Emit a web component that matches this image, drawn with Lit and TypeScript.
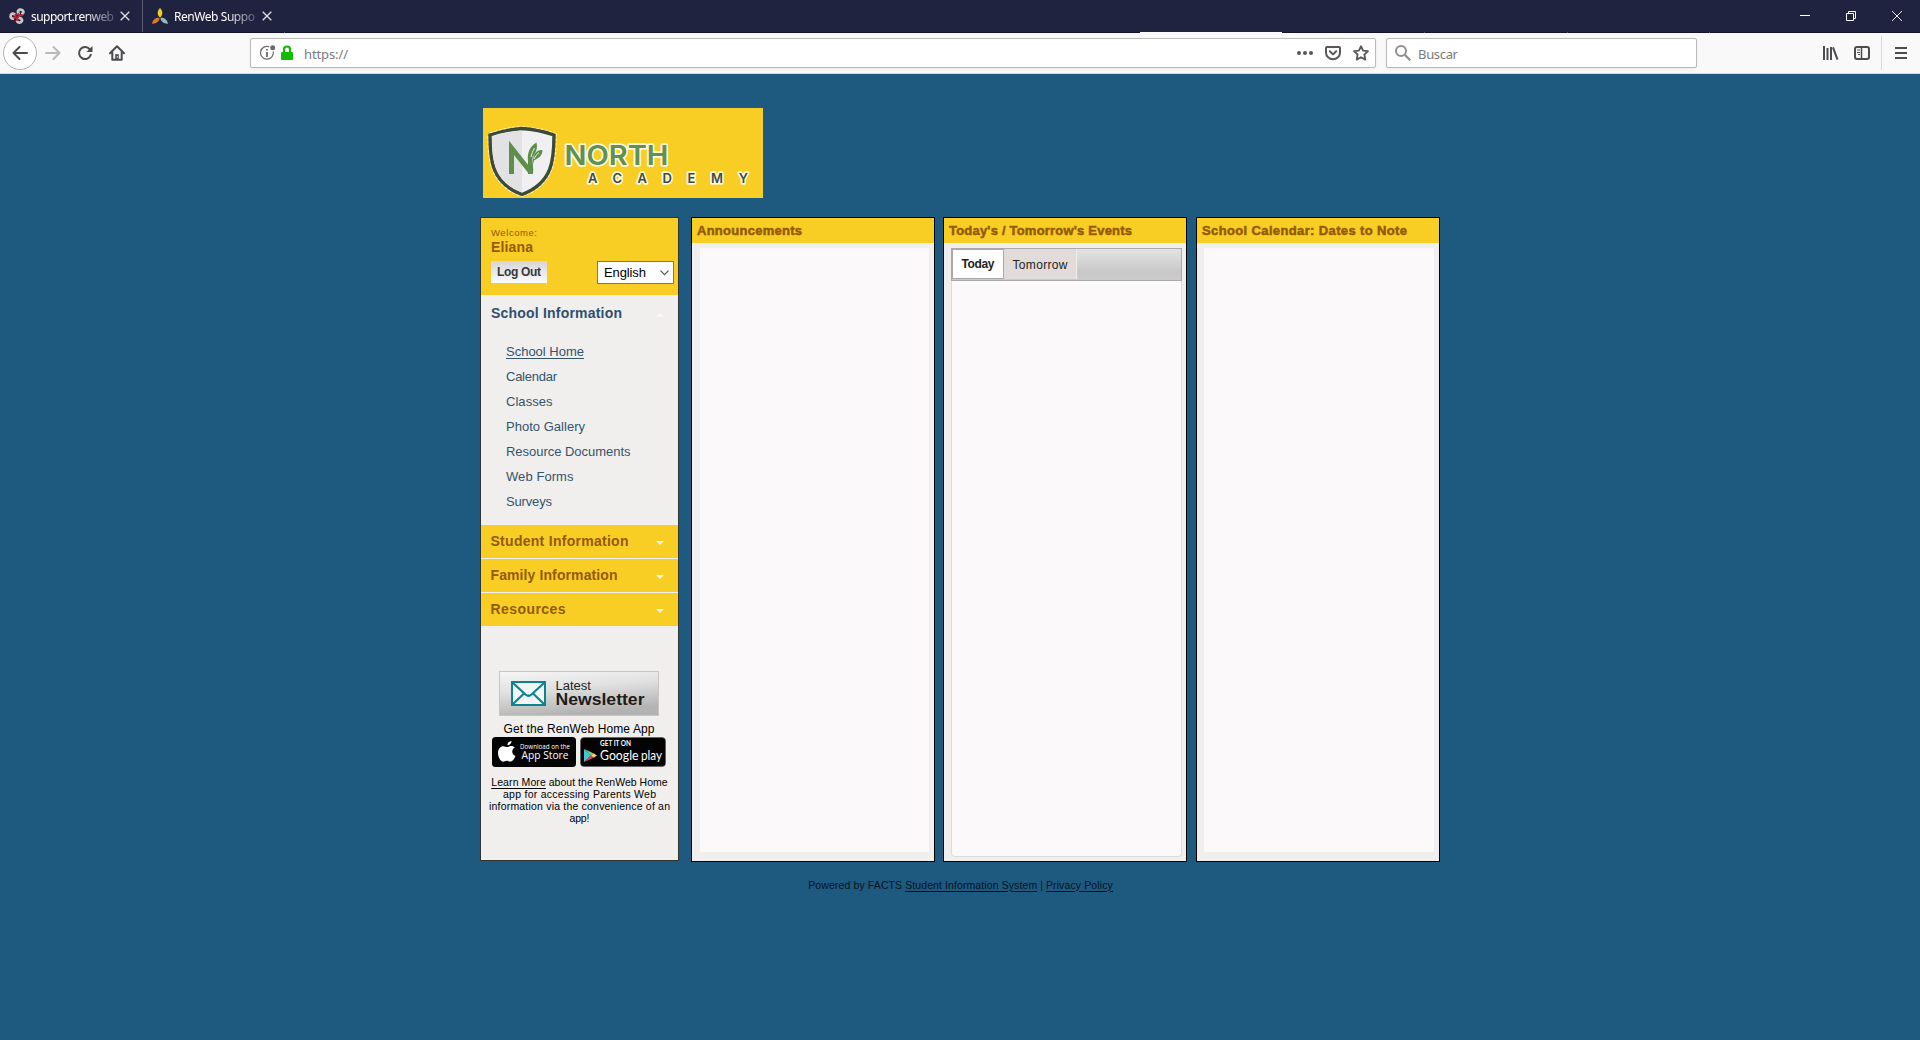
import { LitElement, html, css, svg } from "lit";
import { customElement } from "lit/decorators.js";

/* A run of text whose tracking is set so that it spans `w` pixels. */
const t = (text: string, w: number) => html`<span class="fit" data-w=${w}>${text}</span>`;

const fitAll = (root: ShadowRoot) => {
  root.querySelectorAll<HTMLElement>(".fit").forEach((el) => {
    el.style.letterSpacing = "0px";
    const n = Array.from(el.textContent ?? "").length;
    const natural = el.getBoundingClientRect().width;
    const ls = (Number(el.dataset.w) - natural) / Math.max(1, n - 1);
    el.style.letterSpacing = `${ls.toFixed(3)}px`;
    el.style.marginRight = `${(-ls).toFixed(3)}px`;
  });
};

class FittedElement extends LitElement {
  protected updated() {
    fitAll(this.renderRoot as ShadowRoot);
  }
}

const closeX = html`<svg class="x" width="10" height="10" viewBox="0 0 10 10">
  <path d="M.7 .7L9.3 9.3M9.3 .7L.7 9.3" stroke="#d9d9de" stroke-width="1.4" fill="none" />
</svg>`;

@customElement("browser-chrome")
class BrowserChrome extends FittedElement {
  static styles = css`
    :host { display: block; font-family: "Noto Sans", "Open Sans", sans-serif; }
    svg { display: block; flex: none; }
    .titlebar { height: 32px; background: #202340; display: flex; align-items: center; }
    .tab { display: flex; align-items: center; height: 32px; box-sizing: border-box; padding-left: 9px; width: 143px; color: #fff; font-size: 12px; border-right: 1px solid #5f6178; }
    .tab.last { width: 142px; border-right: 0; }
    .name { margin-left: 6px; width: 84px; height: 20px; line-height: 20px; margin-top: 2px; white-space: nowrap;
      -webkit-mask-image: linear-gradient(90deg, #000 62%, rgba(0, 0, 0, 0.25) 98%, transparent); }
    .last .name { width: 83px; }
    .x { margin-left: 5px; }
    .controls { margin-left: auto; display: flex; align-items: center; gap: 36px; padding-right: 18px; }
    .strip { height: 1px; background: #12142d; display: grid; grid-template-columns: 284px 1px 855px 142px 142px 1px 142px 1px 141px 1px; }
    .dot { background: #5a5c70; }
    .lit { background: #f9f9fa; }
    .tools { height: 41px; box-sizing: border-box; background: #f9f9fa; border-bottom: 1px solid #dcd8d6; display: flex; align-items: center; padding-left: 3px; }
    .back { width: 34px; height: 34px; box-sizing: border-box; border: 1px solid #b3b3b3; border-radius: 50%; background: #fff; display: grid; place-items: center; }
    .fwd { margin-left: 8px; }
    .gap { margin-left: 16px; }
    .field { height: 30px; box-sizing: border-box; border: 1px solid #bbb; border-radius: 2px; background: #fff; display: flex; align-items: center; color: #7b7b7b; font-size: 13px; box-shadow: 0 1px 3px rgba(0, 0, 0, 0.06); }
    .url { margin-left: 125px; width: 1126px; padding: 0 6px 0 9px; }
    .search { margin-left: 10px; width: 311px; padding-left: 8px; }
    .lock { margin-left: 5px; }
    .addr { margin-left: 11px; padding-top: 2px; }
    .query { margin-left: 7px; padding-top: 2px; }
    .right { margin-left: auto; display: flex; gap: 12px; align-items: center; }
    .lib { margin-left: 126px; }
    .side { margin-left: 15px; }
    .sep { margin-left: 11px; width: 1px; height: 34px; background: #d8d8da; }
    .menu { margin-left: 13px; }
  `;

  render() {
    return html`
      <div class="titlebar">
        <div class="tab">
          <svg width="16" height="16" viewBox="0 0 16 16" fill="none" stroke="#c6c6cc" stroke-width="2.8" stroke-linecap="round">
            <path d="M9.5 5.5C8 3 9.800 1.300 12 1.600C14.600 2 15 4.600 13.400 5.600" />
            <path d="M5.800 6.500C3.800 4.800 1.500 5.800 1.600 8.400C1.700 9.800 2.600 10.800 4 10.600" />
            <path d="M10 9.800C12.600 10 13.600 12 12.600 13.500C11.500 15 9.200 14.800 8.200 13.400" />
            <path d="M9.300 6C10 7.200 11.300 7.600 13 7.200M6.300 6.800C7 7.800 6.600 9 5.500 10M9.300 9.300C8.300 9.600 7.900 11 8.200 12.300" stroke="#d51f2b" stroke-width="2" />
          </svg>
          <div class="name">${t("support.renweb", 83)}</div>
          ${closeX}
        </div>
        <div class="tab last">
          <svg width="16" height="16" viewBox="0 0 16 16">
            <path d="M8 0C11.200 3 11 7 8 9.600C5 7 4.800 3 8 0Z" fill="#f2cf1c" />
            <path d="M7.600 9.800C7.400 13.800 4 16 0 15.700C.6 11.800 4 9 7.600 9.800Z" fill="#df7a29" />
            <path d="M8.400 9.800C12 9 15.400 11.800 16 15.700C12 16 8.600 13.800 8.400 9.800Z" fill="#8fbac0" />
          </svg>
          <div class="name">${t("RenWeb Suppo", 81)}</div>
          ${closeX}
        </div>
        <div class="controls">
          <svg width="10" height="10" viewBox="0 0 10 10"><path d="M0 4.500H10" stroke="#fff" /></svg>
          <svg width="10" height="10" viewBox="0 0 10 10" fill="none" stroke="#fff"><path d="M.5 2.500H7.500V9.500H.5ZM2.500 2.500V.5H9.500V7.500H7.500" /></svg>
          <svg width="10" height="10" viewBox="0 0 10 10"><path d="M0 0L10 10M10 0L0 10" stroke="#fff" stroke-width=".9" /></svg>
        </div>
      </div>
      <div class="strip">
        <i></i><i class="dot"></i><i></i><i class="lit"></i><i></i><i class="dot"></i><i></i><i class="dot"></i><i></i><i class="dot"></i>
      </div>
      <div class="tools">
        <div class="back">
          <svg width="16" height="16" viewBox="0 0 16 16" fill="none" stroke="#4c4c4f" stroke-width="2" stroke-linecap="round" stroke-linejoin="round"><path d="M15 8H1.500M7.500 2L1.500 8L7.500 14" /></svg>
        </div>
        <svg class="fwd" width="16" height="16" viewBox="0 0 16 16" fill="none" stroke="#b9b9ba" stroke-width="2" stroke-linecap="round" stroke-linejoin="round"><path d="M1 8H14.500M8.500 2L14.500 8L8.500 14" /></svg>
        <svg class="gap" width="16" height="16" viewBox="0 0 16 16" fill="none" stroke="#4c4c4f" stroke-width="2" stroke-linecap="round"><path d="M12.800 4.300A6 6 0 1 0 13.800 9.800" /><path d="M15.500 1V7H9.500Z" fill="#4c4c4f" stroke="none" /></svg>
        <svg class="gap" width="16" height="16" viewBox="0 0 16 16" fill="none" stroke="#4c4c4f" stroke-width="2" stroke-linecap="round" stroke-linejoin="round"><path d="M1 8.300L8 1.300L15 8.300M3.300 7.500V14.800H12.700V7.500" /><path d="M6.200 14.800V9.200H9.800V14.800Z" stroke="none" fill="#4c4c4f" /><path d="M8.300 11.500V12.300" stroke="#f9f9fa" stroke-width="1" /></svg>
        <div class="field url">
          <svg width="16" height="16" viewBox="0 0 16 16" fill="none" stroke="#6a6a6c">
            <path d="M9.300 1.800A6.400 6.400 0 1 0 13.200 6.500" stroke-width="1.200" />
            <path d="M7 4V5.600M7 7V12" stroke-width="1.800" /><circle cx="12.700" cy="2.800" r="2.500" fill="#6a6a6c" stroke="none" />
          </svg>
          <svg class="lock" width="12" height="16" viewBox="0 0 12 16"><path d="M3 8V4.500A3 3 0 0 1 9 4.500V8" fill="none" stroke="#12bc00" stroke-width="2.200" /><rect y="7" width="12" height="8" rx="1" fill="#12bc00" /></svg>
          <div class="addr">${t("https://", 44)}</div>
          <div class="right">
            <svg width="16" height="16" viewBox="0 0 16 16" fill="#58585b"><circle cx="2" cy="8" r="2" /><circle cx="8" cy="8" r="2" /><circle cx="14" cy="8" r="2" /></svg>
            <svg width="16" height="16" viewBox="0 0 16 16" fill="none" stroke="#58585b" stroke-width="2" stroke-linecap="round" stroke-linejoin="round"><path d="M2 2H14Q15 2 15 3V7.500A7 6.800 0 0 1 1 7.500V3Q1 2 2 2Z" /><path d="M4.800 6.300L8 9.400L11.200 6.300" /></svg>
            <svg width="16" height="16" viewBox="0 0 16 16" fill="none" stroke="#58585b" stroke-width="1.800" stroke-linejoin="round"><path d="M8 1.200L10.100 5.600L15 6.200L11.400 9.500L12.300 14.600L8 12.200L3.700 14.600L4.600 9.500L1 6.200L5.900 5.600Z" /></svg>
          </div>
        </div>
        <div class="field search">
          <svg width="16" height="16" viewBox="0 0 16 16" fill="none" stroke="#8e8e8f" stroke-width="2"><circle cx="6" cy="6" r="5" /><path d="M9.700 9.700L15.300 15.300" stroke-width="2.200" /></svg>
          <div class="query">${t("Buscar", 40)}</div>
        </div>
        <svg class="lib" width="16" height="16" viewBox="0 0 16 16" fill="none" stroke="#4c4c4f" stroke-width="2"><path d="M1 1V15M4.500 3V15M8 2V15M10 2.300L14.500 14.700" /></svg>
        <svg class="side" width="16" height="16" viewBox="0 0 16 16" fill="none" stroke="#4c4c4f"><rect x="1" y="2" width="14" height="12" rx="2" stroke-width="2" /><path d="M7.500 2V14" stroke-width="1.500" /><path d="M3 5H6M3 7.500H6M4 9.500H6" /></svg>
        <div class="sep"></div>
        <svg class="menu" width="12" height="16" viewBox="0 0 12 16" stroke="#4c4c4f" stroke-width="2"><path d="M0 3H12M0 8H12M0 13H12" /></svg>
      </div>
    `;
  }
}

@customElement("side-bar")
class SideBar extends FittedElement {
  static styles = css`
    :host { display: block; width: 199px; height: 644px; box-sizing: border-box; border: 1px solid #333; background: #f0efed; color: #000; }
    svg { display: block; }
    .user { height: 77px; box-sizing: border-box; background: #f8cd24; padding: 10px 4px 0 10px; color: #945a04; }
    .welcome { font-size: 9.500px; line-height: 10px; }
    .who { font-size: 14px; font-weight: bold; line-height: 16px; margin-top: 1px; }
    .row { display: flex; justify-content: space-between; margin-top: 6px; }
    .logout { width: 56px; height: 22px; background: linear-gradient(#d6d6d8, #fbfbfb); color: #33393f; font-size: 12px; font-weight: bold; line-height: 22px; text-align: center; }
    .lang { width: 77px; height: 23px; box-sizing: border-box; border: 1px solid #777; background: #fff; color: #000; display: flex; align-items: center; justify-content: space-between; padding: 0 4px 0 6px; font-size: 13px; }
    .head { height: 33px; display: flex; align-items: center; justify-content: space-between; padding: 0 15px 0 10px; font-size: 14px; font-weight: bold; box-sizing: border-box; }
    .yellow { background: #f8cd24; color: #945a04; margin-bottom: 1px; padding: 0 14px 2px 9.500px; }
    .blue { color: #2f4f70; height: 36px; padding-right: 14px; }
    .yellow svg { margin-top: 5px; }
    .blue svg { margin-top: 3px; }
    .menu { list-style: none; margin: 0; padding: 8px 0 10px 25px; height: 194px; box-sizing: border-box; font-size: 13px; color: #34536f; }
    .menu li { line-height: 25px; height: 25px; }
    .on { text-decoration: underline; text-underline-offset: 2px; text-decoration-thickness: 1px; }
    .promo { padding-top: 44px; display: flex; flex-direction: column; align-items: center; }
    .news { margin-right: 2px; }
    .get { font-size: 12px; line-height: 14px; margin: 6px 0 1px; padding-right: 1px; white-space: nowrap; }
    .stores { display: flex; gap: 4px; margin-left: -1px; }
    .more { font-size: 10.500px; line-height: 12px; text-align: center; margin-top: 8.500px; }
    .more div { white-space: nowrap; height: 12px; }
    .u { text-decoration: underline; text-underline-offset: 2px; text-decoration-thickness: 1px; }
  `;

  private section(label: string, w: number) {
    return html`<div class="head yellow">${t(label, w)}
      <svg width="8" height="4" viewBox="0 0 8 4"><path d="M0 0H8L4 4Z" fill="#fdf8e6" /></svg></div>`;
  }

  render() {
    const links: [string, number][] = [
      ["School Home", 78], ["Calendar", 51], ["Classes", 46.5], ["Photo Gallery", 79],
      ["Resource Documents", 124.5], ["Web Forms", 67.5], ["Surveys", 46],
    ];
    return html`
      <div class="user">
        <div class="welcome">${t("Welcome:", 46)}</div>
        <div class="who">${t("Eliana", 42)}</div>
        <div class="row">
          <div class="logout">${t("Log Out", 44)}</div>
          <div class="lang">${t("English", 42)}
            <svg width="9" height="6" viewBox="0 0 9 6"><path d="M.5 .7L4.500 4.700L8.500 .7" fill="none" stroke="#555" stroke-width="1.200" /></svg>
          </div>
        </div>
      </div>
      <div class="head blue">${t("School Information", 131)}
        <svg width="8" height="4" viewBox="0 0 8 4"><path d="M0 4H8L4 0Z" fill="#f8f8f8" /></svg>
      </div>
      <ul class="menu">
        ${links.map(([l, w], i) => html`<li class=${i === 0 ? "on" : ""}>${t(l, w)}</li>`)}
      </ul>
      ${this.section("Student Information", 138)}
      ${this.section("Family Information", 127)}
      ${this.section("Resources", 75)}
      <div class="promo">
        <svg class="news" width="160" height="45" viewBox="0 0 160 45" font-family="Liberation Sans, Arial, sans-serif">
          <defs>
            <linearGradient id="nl" x1="0" y1="0" x2=".3" y2="1"><stop offset="0" stop-color="#f6f6f6" /><stop offset=".45" stop-color="#e2e1e1" /><stop offset="1" stop-color="#b4b3b3" /></linearGradient>
          </defs>
          <rect x=".5" y=".5" width="159" height="44" fill="url(#nl)" stroke="#c6c5c4" />
          <rect x="13" y="11" width="33" height="23" fill="#f3f5f5" stroke="#0d8390" stroke-width="2" />
          <path d="M14 12L26.500 23.500Q29.500 26 32.500 23.500L45 12M14 33L25 22.500M45 33L34 22.500" fill="none" stroke="#0d8390" stroke-width="2.200" />
          <text x="56.500" y="19" font-size="12.500" fill="#222" textLength="35.500" lengthAdjust="spacingAndGlyphs">Latest</text>
          <text x="56.500" y="33.500" font-size="16.500" font-weight="bold" fill="#1c1c1c" textLength="89" lengthAdjust="spacingAndGlyphs">Newsletter</text>
        </svg>
        <div class="get">${t("Get the RenWeb Home App", 151)}</div>
        <div class="stores">
          <svg width="84" height="30" viewBox="0 0 84 30" font-family="Open Sans, Noto Sans, sans-serif" fill="#fff">
            <rect width="84" height="30" rx="3.500" fill="#030303" />
            <path d="M19.500 4C19.700 6.200 17.600 8.300 15.500 8.200C15.200 6.200 17.300 4.100 19.500 4ZM22.800 10.500C18.800 12.800 19.800 17.700 23.500 19C22.500 21.800 20.400 24.800 18.200 24.600C16.800 24.500 16.200 23.700 14.700 23.700C13.100 23.700 12.400 24.600 11.200 24.700C8.500 24.600 5.800 19.500 6 15.500C6.200 11.500 8.600 9.200 11.300 9.200C12.900 9.200 13.900 10.100 15.100 10.100C16.300 10.100 17.400 9 19.300 9C20.700 9 22 9.600 22.800 10.500Z" />
            <text x="28" y="11.500" font-size="6.500" textLength="50" lengthAdjust="spacingAndGlyphs">Download on the</text>
            <text x="29.500" y="22" font-size="10.500" font-weight="500" textLength="47" lengthAdjust="spacingAndGlyphs">App Store</text>
          </svg>
          <svg width="86" height="30" viewBox="0 0 86 30" fill="#fff">
            <rect x=".5" y=".5" width="85" height="29" rx="3.500" fill="#030303" stroke="#555" stroke-width=".6" />
            <path d="M4 12L11 18.500L4 25Z" fill="#45c6d6" /><path d="M4 12L13.500 16.200L11 18.500Z" fill="#6fd08e" />
            <path d="M13.500 16.200L17 18.500L13.500 20.800L11 18.500Z" fill="#f6d365" /><path d="M4 25L11 18.500L13.500 20.800Z" fill="#e2455a" />
            <text x="20" y="9" font-size="6.500" font-weight="bold" font-family="Lato, sans-serif" textLength="31" lengthAdjust="spacingAndGlyphs">GET IT ON</text>
            <text x="20" y="23" font-size="14" font-family="Lato, sans-serif" textLength="38.500" lengthAdjust="spacingAndGlyphs">Google</text>
            <text x="61" y="23" font-size="12.500" font-family="Lato, sans-serif" textLength="21" lengthAdjust="spacingAndGlyphs">play</text>
          </svg>
        </div>
        <div class="more">
          <div><span class="u">${t("Learn More", 54.5)}</span> ${t("about the RenWeb Home", 119)}</div>
          <div>${t("app for accessing Parents Web", 153)}</div>
          <div>${t("information via the convenience of an", 181)}</div>
          <div>${t("app!", 20)}</div>
        </div>
      </div>
    `;
  }
}

@customElement("app-root")
class AppRoot extends FittedElement {
  static styles = css`
    :host { display: block; width: 1920px; height: 1040px; overflow: hidden; background: #1e5a80; font-family: "Liberation Sans", Arial, sans-serif; }
    .page { width: 960px; margin-left: 480px; padding-top: 34px; }
    .logo { display: block; margin-left: 3px; }
    .cols { display: flex; align-items: flex-start; margin-top: 19px; }
    .panel { width: 244px; height: 645px; box-sizing: border-box; border: 1px solid #000; background: #f0efed; display: flex; flex-direction: column; }
    .first { margin-left: 12px; }
    .second { margin-left: 8px; }
    .third { margin-left: 9px; }
    .title { height: 25px; line-height: 26px; box-sizing: border-box; background: #f8cd24; color: #945a04; font-size: 13px; font-weight: bold; padding-left: 5px; -webkit-text-stroke: 0.5px #945a04; white-space: nowrap; }
    .body { flex: 1; margin: 5px 5px 9px 8px; background: #fbf9fa; }
    .third .body { margin-left: 7px; }
    .events { flex: 1; margin: 5px 4px 4px 7px; background: #fbf9fa; border: 1px solid #dddcda; border-top: 0; border-radius: 0 0 4px 4px; }
    .tabs { height: 33px; margin: 0 -1px; box-sizing: border-box; border: 1px solid #a9a9a9; background: linear-gradient(#e3e3e3, #c8c8c8 75%, #cbcbcb); display: flex; font-size: 12px; color: #222; }
    .tab { box-sizing: border-box; height: 30px; text-align: center; }
    .active { width: 52px; background: #fff; border: 1px solid #a9a9a9; line-height: 28px; font-weight: bold; }
    .other { width: 73px; background: #e1dcd9; border-right: 1px solid #eee; line-height: 32px; }
    .foot { font-size: 10.500px; line-height: 14px; display: flex; justify-content: center; margin-top: 15.500px; padding-left: 1px; color: #06121b; gap: 3px; white-space: nowrap; }
    .u { text-decoration: underline; text-underline-offset: 2px; text-decoration-thickness: 1px; }
  `;

  render() {
    const words = svg`
      <text x="81.500" y="57" font-size="27.500" textLength="104" lengthAdjust="spacingAndGlyphs">NORTH</text>
      <text x="105" y="75" font-size="13" textLength="160">ACADEMY</text>`;
    return html`
      <browser-chrome></browser-chrome>
      <div class="page">
        <svg class="logo" width="280" height="90" viewBox="0 0 280 90">
          <rect width="280" height="90" fill="#f8cd24" />
          <path d="M39 20.500Q55 21.500 71 27C71 51 70 75 39 86.500C8 75 7 51 7 27Q23 21.500 39 20.500Z" fill="none" stroke="#fdf8dc" stroke-width="5" stroke-dasharray="3 1.500" />
          <path d="M39 20.500Q55 21.500 71 27C71 51 70 75 39 86.500C8 75 7 51 7 27Q23 21.500 39 20.500Z" fill="#f0f0f2" stroke="#3c4a38" stroke-width="3.400" />
          <path d="M39 22.500V84.500C10 73.500 9 50 9 28.500Q23 23.500 39 22.500Z" fill="#e2e2e5" />
          <path d="M28.500 66V40L48 64.500" fill="none" stroke="#5d8f4b" stroke-width="5" />
          <path d="M45 66V53C44 45 47 38 53.500 34.500C55 41 52.500 45 49.500 49C49 55 51 60 50 66Z" fill="#5d8f4b" />
          <path d="M50 52C50.500 45 54 41.500 59.500 42C59.500 47.500 56 50 51 52.500L49.500 58Z" fill="#5d8f4b" />
          <path d="M48 49Q49 44 51.500 40M51 51Q52.500 47 56 44.500" stroke="#e6e8e6" stroke-width="1" fill="none" />
          <g font-family="Inter, Lato, sans-serif" font-weight="600">
            <g fill="#fdf8dc" stroke="#fdf8dc" stroke-width="3.400" stroke-linejoin="round">${words}</g>
          </g>
          <g font-family="Inter, Lato, sans-serif" font-weight="600">
            <text x="81.500" y="57" font-size="27.500" textLength="104" lengthAdjust="spacingAndGlyphs" fill="#5f9055">NORTH</text>
            <text x="105" y="75" font-size="13" textLength="160" fill="#3e4d43">ACADEMY</text>
          </g>
        </svg>
        <div class="cols">
          <side-bar></side-bar>
          <div class="panel first">
            <div class="title">${t("Announcements", 105)}</div>
            <div class="body"></div>
          </div>
          <div class="panel second">
            <div class="title">${t("Today's / Tomorrow's Events", 183)}</div>
            <div class="events">
              <div class="tabs">
                <div class="tab active">${t("Today", 33)}</div>
                <div class="tab other">${t("Tomorrow", 55)}</div>
              </div>
            </div>
          </div>
          <div class="panel third">
            <div class="title">${t("School Calendar: Dates to Note", 205)}</div>
            <div class="body"></div>
          </div>
        </div>
        <div class="foot">
          ${t("Powered by FACTS", 94)}
          <span class="u">${t("Student Information System", 132)}</span>
          <span>|</span>
          <span class="u">${t("Privacy Policy", 67)}</span>
        </div>
      </div>
    `;
  }
}
